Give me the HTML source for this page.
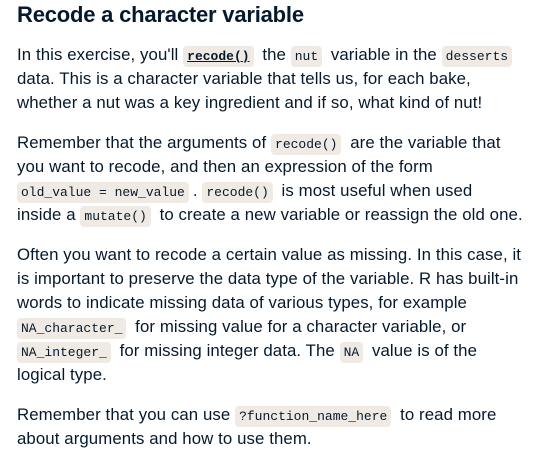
<!DOCTYPE html>
<html><head><meta charset="utf-8"><style>
body{margin:0;background:#fff;color:#05192d;font-family:"Liberation Sans",sans-serif;}
.w{padding:0 0 0 17px;white-space:nowrap;}
h1{font-size:22px;font-weight:bold;margin:0;line-height:30px;padding-top:0;letter-spacing:-0.2px}
p{font-size:16.8px;line-height:24px;margin:0 0 16px 0;letter-spacing:0.1px}
code{font-family:"Liberation Mono",monospace;font-size:13px;line-height:14px;background:#efebe4;border-radius:4px;padding:3px 4px;margin-right:4px;letter-spacing:0}
code.b{font-weight:bold;text-decoration:underline}
</style></head><body><div class="w">
<h1>Recode a character variable</h1>
<p style="margin-top:13px">In this exercise, you'll <code class="b">recode()</code> the <code>nut</code> variable in the <code>desserts</code><br>data. This is a character variable that tells us, for each bake,<br>whether a nut was a key ingredient and if so, what kind of nut!</p>
<p>Remember that the arguments of <code>recode()</code> are the variable that<br>you want to recode, and then an expression of the form<br><code>old_value = new_value</code>. <code>recode()</code> is most useful when used<br>inside a <code>mutate()</code> to create a new variable or reassign the old one.</p>
<p>Often you want to recode a certain value as missing. In this case, it<br>is important to preserve the data type of the variable. R has built-in<br>words to indicate missing data of various types, for example<br><code>NA_character_</code> for missing value for a character variable, or<br><code>NA_integer_</code> for missing integer data. The <code>NA</code> value is of the<br>logical type.</p>
<p>Remember that you can use <code>?function_name_here</code> to read more<br>about arguments and how to use them.</p>
</div></body></html>
